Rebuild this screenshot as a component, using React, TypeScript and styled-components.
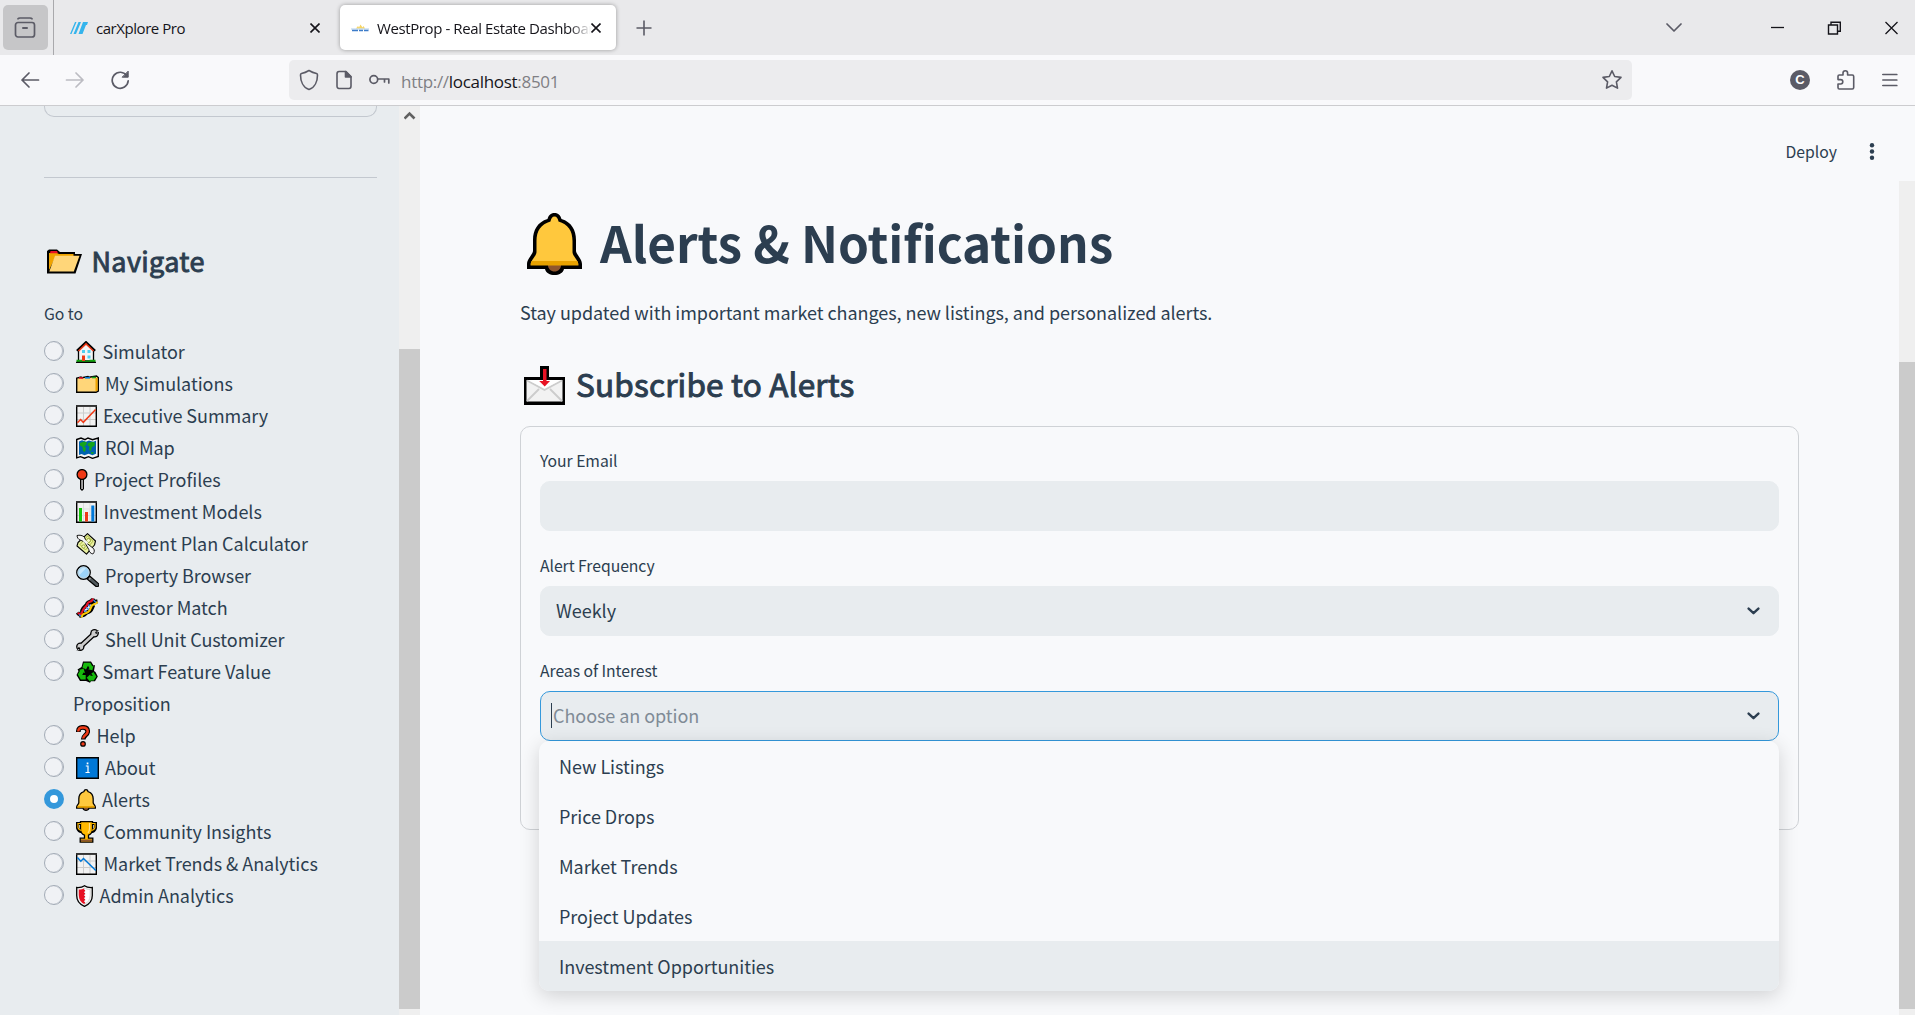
import React from "react";
import styled, { createGlobalStyle } from "styled-components";

const TEXT = "#2c3e50";
const APP_FONT = `"Noto Sans CJK SC", "Noto Sans", sans-serif`;
const UI_FONT = `"Open Sans", "Noto Sans", sans-serif`;

const GlobalStyle = createGlobalStyle`
  *, *::before, *::after { box-sizing: border-box; }
  body { margin: 0; background: #f8f9fb; overflow: hidden; }
  h1, h2, h3, p, ul { margin: 0; padding: 0; font-weight: inherit; }
`;

const Window = styled.div`
  display: flex;
  flex-direction: column;
  width: 1915px;
  height: 1015px;
  overflow: hidden;
  background: #f8f9fb;
  color: ${TEXT};
  font-family: ${APP_FONT};
`;

/* ---------- browser chrome ---------- */

const TabStrip = styled.div`
  display: flex;
  align-items: center;
  height: 55px;
  flex: none;
  background: #e9e9eb;
  font-family: ${UI_FONT};
  color: #15141a;
`;

const ViewButton = styled.div`
  display: flex;
  align-items: center;
  justify-content: center;
  width: 45px;
  height: 45px;
  margin-left: 3px;
  padding-right: 1px;
  border-radius: 5px;
  background: #c6c6c8;
`;

const StripDivider = styled.div`
  width: 1px;
  height: 55px;
  margin: 0 5px 0 5px;
  background: #a9a9ac;
`;

const Tab = styled.div<{ $active?: boolean }>`
  display: flex;
  align-items: center;
  width: 276px;
  height: 45px;
  margin-right: ${(p) => (p.$active ? 0 : 5)}px;
  padding: 0 15px 0 11px;
  border-radius: 5px;
  background: ${(p) => (p.$active ? "#fff" : "transparent")};
  box-shadow: ${(p) => (p.$active ? "0 0 4px rgba(0,0,0,.35)" : "none")};
`;

const TabTitle = styled.span<{ $spacing: number; $fade?: boolean }>`
  flex: 1;
  margin-left: 8px;
  overflow: hidden;
  white-space: nowrap;
  font-size: 15px;
  line-height: 24px;
  letter-spacing: ${(p) => p.$spacing}px;
  mask-image: ${(p) => (p.$fade ? "linear-gradient(to left, transparent 0, #000 22px)" : "none")};
`;

const Spacer = styled.div`
  flex: 1;
`;

const WindowControls = styled.div`
  display: flex;
  align-items: center;
  padding-right: 17px;
`;

const ControlSlot = styled.div<{ $gap: number }>`
  display: flex;
  margin-left: ${(p) => p.$gap}px;
`;

const Toolbar = styled.div`
  display: flex;
  align-items: center;
  height: 51px;
  flex: none;
  background: #f9f9fb;
  border-bottom: 1px solid #cccccf;
  font-family: ${UI_FONT};
`;

const NavButtons = styled.div`
  display: flex;
  gap: 25px;
  width: 289px;
  padding-left: 20px;
`;

const AddressBar = styled.div`
  display: flex;
  align-items: center;
  width: 1343px;
  height: 40px;
  padding: 0 9px 0 10px;
  border-radius: 5px;
  background: #ececee;
`;

const Url = styled.span`
  flex: 1;
  margin-left: 10px;
  padding-top: 3px;
  color: #7f7f84;
  font-size: 17px;
  line-height: 24px;
  letter-spacing: -0.3px;

  b {
    color: #15141a;
    font-weight: 400;
  }
`;

const ToolbarActions = styled.div`
  display: flex;
  align-items: center;
  gap: 26px;
  margin-left: 158px;
`;

const Avatar = styled.div`
  display: flex;
  align-items: center;
  justify-content: center;
  width: 20px;
  height: 20px;
  border-radius: 50%;
  background: #5b5b66;
  color: #fff;
  font: 700 13px/20px "Liberation Sans", sans-serif;
`;

/* ---------- page ---------- */

const Page = styled.div`
  display: flex;
  flex: 1;
  min-height: 0;
`;

const Sidebar = styled.aside`
  width: 399px;
  padding: 0 22px 0 44px;
  background: #e8ecef;
`;

const PanelBottom = styled.div`
  height: 11px;
  border: 1px solid #c3c8cf;
  border-top: 0;
  border-radius: 0 0 10px 10px;
`;

const Rule = styled.div`
  height: 1px;
  margin-top: 60px;
  background: #c3c8cf;
`;

const NavTitle = styled.h2`
  display: flex;
  align-items: center;
  height: 36px;
  margin-top: 65px;
  padding-left: 3px;
  font-size: 27px;
  line-height: 36px;
  letter-spacing: 0.35px;
  -webkit-text-stroke: 0.9px ${TEXT};
`;

const GroupLabel = styled.div`
  height: 24px;
  margin: 23px 0 9px;
  font-size: 15.75px;
  line-height: 24px;
  letter-spacing: -0.05px;
`;

const NavList = styled.ul`
  list-style: none;
`;

const NavItem = styled.li`
  display: flex;
  align-items: flex-start;
  font-size: 18px;
  line-height: 32px;
  letter-spacing: -0.04px;
`;

const Radio = styled.span<{ $checked: boolean }>`
  flex: none;
  width: 20px;
  height: 20px;
  margin: 6px 9px 0 0;
  border-radius: 50%;
  border: ${(p) => (p.$checked ? "6.5px solid #3498db" : "1px solid #a3abb6")};
  background: ${(p) => (p.$checked ? "#fff" : "#f0f2f5")};
  box-shadow: ${(p) => (p.$checked ? "none" : "inset -1px 0 0 #b9c0c9")};
`;

const NavText = styled.span`
  white-space: pre-line;
`;

const EmojiSlot = styled.span<{ $advance: number }>`
  display: inline-flex;
  width: ${(p) => p.$advance}px;
  height: 22px;
  padding-left: 3px;
  vertical-align: -4px;
  line-height: 0;
`;

const TitleIcon = styled.span<{ $width: number; $drop?: number }>`
  display: inline-flex;
  flex: none;
  width: ${(p) => p.$width}px;
  padding-top: ${(p) => p.$drop ?? 0}px;
`;

const Track = styled.div<{ $width: number }>`
  display: flex;
  flex-direction: column;
  flex: none;
  width: ${(p) => p.$width}px;
  padding-bottom: 6px;
  background: #efefef;
`;

const ArrowCap = styled.div<{ $height: number }>`
  display: flex;
  justify-content: center;
  flex: none;
  height: ${(p) => p.$height}px;
  padding-top: 4px;
`;

const Thumb = styled.div`
  flex: 1;
  background: #cbcbcb;
`;

const Main = styled.main`
  display: flex;
  flex-direction: column;
  flex: 1;
  min-width: 0;
`;

const AppHeader = styled.header`
  display: flex;
  align-items: center;
  justify-content: flex-end;
  gap: 31px;
  height: 75px;
  flex: none;
  padding: 16px 39px 0 0;
  font-size: 15.75px;
  line-height: 24px;
`;

const ScrollArea = styled.div`
  display: flex;
  flex: 1;
  min-height: 0;
`;

const Content = styled.div`
  flex: 1;
  padding: 31px 100px 0 100px;
`;

const PageTitle = styled.h1`
  display: flex;
  align-items: center;
  height: 60px;
  padding-left: 7px;
  font-size: 49.5px;
  line-height: 60px;
  font-weight: 700;
  letter-spacing: -0.06px;
`;

const Intro = styled.p`
  height: 30px;
  margin-top: 25px;
  font-size: 18px;
  line-height: 30px;
  letter-spacing: -0.045px;
`;

const SectionTitle = styled.h3`
  display: flex;
  align-items: center;
  height: 42px;
  margin-top: 35px;
  padding-left: 4px;
  font-size: 31.5px;
  line-height: 42px;
  letter-spacing: 0.2px;
  -webkit-text-stroke: 1px ${TEXT};
`;

const FormCard = styled.form`
  display: flex;
  flex-direction: column;
  gap: 23px;
  height: 404px;
  margin-top: 22px;
  padding: 23px 19px 0;
  border: 1px solid #cfd2d6;
  border-radius: 10px;
`;

const Field = styled.div`
  position: relative;
`;

const FieldLabel = styled.div`
  height: 22px;
  margin-bottom: 9px;
  font-size: 15.75px;
  line-height: 22px;
  letter-spacing: -0.05px;
`;

const Control = styled.div<{ $focused?: boolean }>`
  display: flex;
  align-items: center;
  justify-content: space-between;
  height: 50px;
  margin-bottom: 1px;
  padding: 0 18.5px 0 ${(p) => (p.$focused ? 10 : 15)}px;
  border: 1px solid ${(p) => (p.$focused ? "#3498db" : "#e8ecef")};
  border-radius: 10px;
  background: #e8ecef;
  font-size: 18px;
  line-height: 30px;
  letter-spacing: -0.03px;
`;

const Value = styled.span`
  padding-bottom: 2px;
`;

const Placeholder = styled(Value)`
  display: flex;
  align-items: center;
  color: #808b96;
  letter-spacing: -0.06px;
`;

const Caret = styled.i`
  width: 1px;
  height: 25px;
  margin-right: 1px;
  background: ${TEXT};
`;

const Menu = styled.ul`
  position: absolute;
  top: 81px;
  left: -1px;
  right: 0;
  overflow: hidden;
  list-style: none;
  border-radius: 10px;
  background: #f8f9fb;
  box-shadow: 0 5px 20px rgba(0, 0, 0, 0.16);
`;

const Option = styled.li<{ $active: boolean }>`
  height: 50px;
  padding: 0 20px;
  background: ${(p) => (p.$active ? "#e8ecef" : "transparent")};
  font-size: 18px;
  line-height: 50px;
  letter-spacing: -0.04px;
`;

/* ---------- icons ---------- */

const CloseIcon = () => (
  <svg width="10" height="10" viewBox="0 0 10 10" stroke="#15141a" strokeWidth="1.6">
    <path d="M.5.5l9 9M9.5.5l-9 9" />
  </svg>
);

const line = { fill: "none", stroke: "#5b5b66", strokeWidth: 1.7, strokeLinecap: "round", strokeLinejoin: "round" } as const;

const Chevron = () => (
  <svg width="13" height="9" viewBox="0 0 13 9" fill="none" stroke="#2c3e50" strokeWidth="2.4" strokeLinecap="round" strokeLinejoin="round">
    <path d="M1.6 1.6l4.9 4.6 4.9-4.6" />
  </svg>
);

const Bell = ({ width, height }: { width: number; height: number }) => (
  <svg width={width} height={height} viewBox="0 0 55 62" preserveAspectRatio="none">
    <path d="M27.500 0c-4 0-6 2.500-7 6C10.500 9 6 17 6 27v11c0 3-6 8-6 13v5h18c1 4 5 6 9.500 6s8.500-2 9.500-6h18v-5c0-5-6-10-6-13V27c0-10-4.500-18-14.500-21-1-3.500-3-6-7-6z" fill="#000" />
    <path d="M21 52h13c0 4-3 6.500-6.500 6.500S21 56 21 52z" fill="#8e562e" />
    <path d="M27.500 3.500c-2.300 0-3.500 2-4 5C14 11 9.500 18 9.500 28v11c0 4-5 7-6 12.500h48C50.500 46 45.500 43 45.500 39V28c0-10-4.500-17-14-19.500-.5-3-1.700-5-4-5z" fill="#ffc83d" />
    <path d="M4.500 48h46l1 4.500h-48z" fill="#e8a200" />
  </svg>
);

const glyphs: Record<string, [number, React.ReactNode]> = {
  house: [20, <>
    <path d="M2.500 9.500V20h15V9.500L10 2z" fill="#f5f5f5" stroke="#000" strokeWidth="1.300" />
    <path d="M.8 9.800L10 1l9.200 8.800" fill="none" stroke="#000" strokeWidth="2" />
    <path d="M2.500 10L10 2.900l7.500 7.100" fill="none" stroke="#f03a17" strokeWidth="1.500" />
    <path d="M6 9h3v3H6zM11.500 9h3v3h-3zM11.500 14.500h3v3h-3z" fill="#50d0f0" />
    <path d="M6 14.500h3V20H6z" fill="#f03a17" />
    <path d="M.5 18.800h5.500V20h3.500v-.5h4v-.7h6v2.700H.5z" fill="#13a10e" />
    <path d="M0 21.400h20" stroke="#000" strokeWidth="1.200" />
  </>],
  folders: [23, <>
    <path d="M.7 5.200L5 4l1 .8L12 3.500l1 .7L20.500 3l1.800 1.500v13.500L20 19.300H.7z" fill="#ffd679" stroke="#000" strokeWidth="1.400" />
    <path d="M3 5h4" stroke="#e81224" strokeWidth="1.600" />
    <path d="M9 4.800h5" stroke="#0078d7" strokeWidth="1.600" />
    <path d="M16 4.500h4" stroke="#16a51a" strokeWidth="1.600" />
    <path d="M19.500 5h2v12.500l-2 1z" fill="#f0a400" />
  </>],
  chartUp: [21, <>
    <path d="M.7.700h19.600v20.600H.7z" fill="#f2f2f2" />
    <path d="M7.500 2v19M14 2v19M1 8h19M1 14.500h19" stroke="#ccc" />
    <path d="M.7.700h19.600v20.600H.7z" fill="none" stroke="#000" strokeWidth="1.400" />
    <path d="M0 .9h21" stroke="#333" strokeWidth="1.800" />
    <path d="M1.400 17.800l3.200-3.300 2.700 2.800L19.600 4.500" fill="none" stroke="#f03a17" strokeWidth="1.500" />
  </>],
  map: [23, <>
    <path d="M.7 2.500L5 1l4 1.700L12 1l4.500 1.700L22.300 1v18.500l-5.800 1.800-4-1.600-4 1.500-4-1.500-3.800 1.200z" fill="#f5f5f5" stroke="#000" strokeWidth="1.400" />
    <path d="M3 4.500l3-1.200 4 1.400 3-1.200 4 1.300 3-1v13l-3.500 1.500-4-1.500-4 1.500-3-1.300L3 18z" fill="#0063b1" />
    <path d="M4 6l4-1.500 3 1-1 3-2 .5 2 2-1 4-2-1-.5-4L4 8.500zM12 6l4-1.200 3 .8-.5 3.500-2.500 1-1 4-2-1 .5-3.500-2-1zM15 15l3 .5-1 1.500-2-.5z" fill="#16a51a" />
  </>],
  pin: [12, <>
    <path d="M4 9h4v11l-2 2-2-2z" fill="#000" />
    <path d="M5.400 9h1.300v11H5.400z" fill="#eee" />
    <circle cx="6" cy="5.500" r="4.900" fill="#f03a17" stroke="#000" strokeWidth="1.300" />
  </>],
  bars: [21, <>
    <path d="M.7.700h19.600v20.600H.7z" fill="#f2f2f2" />
    <path d="M7.500 2v19M14 2v19M1 8h19M1 14.500h19" stroke="#ddd" />
    <path d="M.7.700h19.600v20.600H.7z" fill="none" stroke="#000" strokeWidth="1.400" />
    <path d="M0 .9h21" stroke="#333" strokeWidth="1.800" />
    <path d="M3 7h3v13.500H3z" fill="#16c60c" />
    <path d="M9 11h3v9.500H9z" fill="#f03a17" />
    <path d="M15.300 4.500h3v16h-3z" fill="#0078d7" />
  </>],
  money: [20, <>
    <path d="M11.500 .7l8 7.300-1 4-8 9.200L1 13l1-3.500z" fill="#e9f0a0" stroke="#000" strokeWidth="1.100" strokeLinejoin="round" />
    <path d="M11.500 3l5.500 5.200-7.500 8.800L4 11.500z" fill="none" stroke="#a5b43a" strokeWidth=".9" />
    <circle cx="12.500" cy="7.500" r="2" fill="#f4f8c8" stroke="#8a9a20" strokeWidth=".9" />
    <circle cx="7.500" cy="13.500" r="1.600" fill="#f4f8c8" stroke="#8a9a20" strokeWidth=".8" />
    <path d="M1 2.500c2.500-.6 5.500-.3 7.500 1.700l2 5.600L4.500 7.200C2.500 6.600 1 4.500 1 2.500z" fill="#f5f5f5" stroke="#000" strokeWidth=".9" />
    <path d="M8 8l9.500 7.500c1.300 1.800 1 4-.7 5.500-2.300-.6-3.800-2.300-4-4.500z" fill="#f5f5f5" stroke="#000" strokeWidth=".9" />
    <path d="M7.500 7l4 3.500" stroke="#f5f5f5" strokeWidth="2.500" />
  </>],
  lens: [23, <>
    <path d="M13 13l8 6.800" stroke="#000" strokeWidth="5" strokeLinecap="round" />
    <path d="M13 13l2 1.800" stroke="#999" strokeWidth="2.400" />
    <path d="M15.500 15l5.500 4.700" stroke="#4f585c" strokeWidth="2.800" strokeLinecap="round" />
    <circle cx="7.500" cy="7.500" r="6.700" fill="#9cd4fa" stroke="#000" strokeWidth="1.400" />
    <circle cx="7.500" cy="7.500" r="5.600" fill="none" stroke="#c8d4da" strokeWidth="1" />
    <path d="M3.500 10L10 3.200a5 5 0 0 0-6.500 6.800z" fill="#c6e7fc" />
  </>],
  dna: [23, <>
    <path d="M1.500 15.500C4 19 8 19.500 10.500 15.500M5.500 20.500C5 19 5.500 18 6.500 17" fill="none" stroke="#000" strokeWidth="3.800" />
    <path d="M10.500 15.500C17 14.500 15.500 9 18 7.500M6.500 17C4.500 11 9.500 10 11 7.500S15 5 21.500 4.500M11 7.500C11.500 4 16.500 6 17 1.500" fill="none" stroke="#000" strokeWidth="4" />
    <path d="M7.500 12.500l4 3.500M9.800 10l4 3.600M12 7.500l3.500 3" stroke="#3a86e8" strokeWidth="1.400" />
    <path d="M1.800 15.800C5 19 6 16 6.500 14C7.500 10 11 10 11.500 6.500C12.500 4 16.500 5.500 17 1.500" fill="none" stroke="#e81224" strokeWidth="2.100" />
    <path d="M5.500 20.500C6 15.500 9 17.500 12 15C16 12.500 14 8.500 17.500 7.500C19.500 7 20.500 6 21.500 4.800" fill="none" stroke="#fcc800" strokeWidth="2.100" />
    <path d="M17.500 3l2.500 2.500M3 17.500l2 1.800" stroke="#3a86e8" strokeWidth="1.300" />
  </>],
  wrench: [23, <>
    <path d="M4.500 17.500L18.500 4.500" stroke="#000" strokeWidth="5.200" />
    <circle cx="4.300" cy="17.700" r="4.200" fill="#000" />
    <circle cx="18.500" cy="4.300" r="4.300" fill="#000" />
    <circle cx="4.300" cy="17.700" r="2.900" fill="#ccc" />
    <circle cx="18.500" cy="4.300" r="3" fill="#ccc" />
    <path d="M4.500 17.500L18.500 4.500" stroke="#ccc" strokeWidth="2.800" />
    <path d="M19.500 4l3.500-1.500M3.500 18.500L1.500 22" stroke="#000" strokeWidth="2" />
    <path d="M20.800 3.300L23 2.300M2.600 20L1.500 22" stroke="#e8ecef" strokeWidth=".9" />
  </>],
  recycle: [22, <>
    <path d="M7 .5h8l2.500 4 1.500-.5-1 6 1.500 1L21.800 15.500l-2.800 4.700h-4l-1 1.600-4-1.800H4L.5 14l2-4L1.500 8.500l4-2.500z" fill="#000" />
    <path d="M7.800 1.800h6.500l2 3.500 1.200-.2-1.100 4.100-4.200-1 1.300-1-1.500-2.400-2 3.800-3.600-2zM2.900 8.900l4.600-1.300 1.500 4.500-1.500-.6-1.300 2.600h3.500v4.500H4.800L1.800 13.600l2.300-4zM17.400 10.900l3 4.600-2.700 4.100h-3.300v1.400l-3.700-4.200 3.700-3.600v1.500h2.600l-1.800-2z" fill="#16b90c" />
  </>],
  question: [14, <>
    <path d="M2.300 7C2.300 3.500 4 2.300 7 2.300s4.700 1.500 4.700 4.200c0 3.500-4.500 3.500-4.500 8" fill="none" stroke="#000" strokeWidth="4.700" />
    <circle cx="7" cy="18.900" r="2.900" fill="#000" />
    <path d="M2.300 6.500C2.300 3.700 4 2.600 7 2.600s4.700 1.200 4.700 3.900c0 3.500-4.500 3.500-4.500 7" fill="none" stroke="#f03a17" strokeWidth="2.500" />
    <circle cx="7" cy="18.900" r="1.700" fill="#f03a17" />
  </>],
  info: [23, <>
    <path d="M.7.700h21.600v20.600H.7z" fill="#0078d7" stroke="#000" strokeWidth="1.400" />
    <path d="M10.700 5.500h1.700v1.800h-1.700z" fill="#fff" />
    <path d="M9.800 9h2.200v6.300M9.500 15.500h4.200" fill="none" stroke="#fff" strokeWidth="1.200" />
  </>],
  trophy: [21, <>
    <path d="M5 2.500H1.500v4C2 9 4 10.500 6.500 10.500M16 2.500h3.500v4c-.5 2.500-2.500 4-5 4" fill="none" stroke="#000" strokeWidth="3.200" />
    <path d="M4.500.7h12v7c0 4-2 5.800-4 6.500v3h4.300v4H4.200v-4h4.300v-3c-2-.7-4-2.500-4-6.500z" fill="#ffb900" stroke="#000" strokeWidth="1.300" />
    <path d="M5 2.500H2v4C2.300 8 3.500 9 5.500 9.500M16 2.500h3v4c-.3 1.500-1.500 2.500-3.500 3" fill="none" stroke="#ffb900" strokeWidth="1.200" />
    <path d="M13.500 2v5.500c0 2-.7 3.500-1.500 4.500" fill="none" stroke="#ffe08a" strokeWidth="1.200" />
    <path d="M5 18.500h11v2H5z" fill="#8e562e" />
  </>],
  chartDown: [21, <>
    <path d="M.7.700h19.600v20.600H.7z" fill="#f2f2f2" />
    <path d="M7.500 2v19M14 2v19M1 8h19M1 14.500h19" stroke="#ccc" />
    <path d="M.7.700h19.600v20.600H.7z" fill="none" stroke="#000" strokeWidth="1.400" />
    <path d="M0 .9h21" stroke="#333" strokeWidth="1.800" />
    <path d="M1.400 4.500l3.400 3.700 2.700-2.700 12.300 12" fill="none" stroke="#0078d7" strokeWidth="1.500" />
  </>],
  shield: [17, <>
    <path d="M8.500.7c2 1.500 4.500 2 7.800 1.800v8c0 5-3.500 9-7.800 10.800C4 19.500.7 15.500.7 10.500v-8C4 2.700 6.500 2.200 8.500.7z" fill="#f2f2f2" stroke="#000" strokeWidth="1.300" />
    <path d="M8.500 3v16.300C5 17.500 2.800 14.500 2.800 10.300V4.500C5 4.500 7 4 8.500 3z" fill="#e81224" />
    <path d="M8.500 3v16.300c3.500-1.800 5.700-4.800 5.700-9V4.500C12 4.500 10 4 8.500 3z" fill="#fff" stroke="#ccc" strokeWidth=".8" />
    <path d="M8.500 5v14" stroke="#e81224" strokeWidth="1.200" strokeDasharray="1.500 1.500" />
  </>],
};

const Emoji = ({ name }: { name: string }) => {
  if (name === "bell") return <Bell width={20} height={22} />;
  const [width, art] = glyphs[name];
  return (
    <svg width={width} height="22" viewBox={`0 0 ${width} 22`}>
      {art}
    </svg>
  );
};

const navItems: { icon: string; advance: number; label: string }[] = [
  { icon: "house", advance: 29.5, label: "Simulator" },
  { icon: "folders", advance: 32, label: "My Simulations" },
  { icon: "chartUp", advance: 30, label: "Executive Summary" },
  { icon: "map", advance: 32, label: "ROI Map" },
  { icon: "pin", advance: 21, label: "Project Profiles" },
  { icon: "bars", advance: 30.5, label: "Investment Models" },
  { icon: "money", advance: 29.5, label: "Payment Plan Calculator" },
  { icon: "lens", advance: 32, label: "Property Browser" },
  { icon: "dna", advance: 32, label: "Investor Match" },
  { icon: "wrench", advance: 32, label: "Shell Unit Customizer" },
  { icon: "recycle", advance: 29.5, label: "Smart Feature Value\nProposition" },
  { icon: "question", advance: 23.5, label: "Help" },
  { icon: "info", advance: 32, label: "About" },
  { icon: "bell", advance: 29, label: "Alerts" },
  { icon: "trophy", advance: 30.5, label: "Community Insights" },
  { icon: "chartDown", advance: 30.5, label: "Market Trends & Analytics" },
  { icon: "shield", advance: 26.5, label: "Admin Analytics" },
];

const options = ["New Listings", "Price Drops", "Market Trends", "Project Updates", "Investment Opportunities"];

const BrowserTabs = () => (
  <TabStrip>
    <ViewButton>
      <svg width="22" height="22" viewBox="0 0 22 22" {...line}>
        <path d="M4 1.800C4.500 1 5 1 6 1h10c1 0 1.500 0 2 .8" />
        <rect x="1.500" y="5.500" width="19" height="14.500" rx="2.500" />
        <path d="M9 11h4" strokeWidth="2" />
      </svg>
    </ViewButton>
    <StripDivider />
    <Tab>
      <svg width="18" height="12" viewBox="0 0 18 12">
        <path d="M0 12L5 0h1.500l-5 12zM3.500 12l5-12H11L6 12zM8.500 12L13 0h5l-1 3h-1l-3.500 9z" fill="#35b4ec" />
      </svg>
      <TabTitle $spacing={-0.45}>carXplore Pro</TabTitle>
      <CloseIcon />
    </Tab>
    <Tab $active>
      <svg width="18" height="8" viewBox="0 0 18 8">
        <path d="M5 4.500L7 2l1 1.500L9.500 .500l2 3 1-1.500L14 4.500z" fill="#f6d566" />
        <path d="M0 5h18" stroke="#9cc3e8" strokeWidth=".8" />
        <path d="M1 6.500h6M8 6.500h4M13 6.500h4.500" stroke="#3d7cc9" strokeWidth="1.500" />
      </svg>
      <TabTitle $spacing={-0.4} $fade>WestProp - Real Estate Dashboard</TabTitle>
      <CloseIcon />
    </Tab>
    <ControlSlot $gap={20}>
      <svg width="16" height="16" viewBox="0 0 16 16" stroke="#5b5b66" strokeWidth="1.600">
        <path d="M8 .5v15M.5 8h15" />
      </svg>
    </ControlSlot>
    <Spacer />
    <WindowControls>
      <svg width="16" height="10" viewBox="0 0 16 10" {...line}>
        <path d="M1 1l7 7 7-7" />
      </svg>
      <ControlSlot $gap={88}>
        <svg width="14" height="14" viewBox="0 0 14 14" stroke="#15141a" strokeWidth="1.300">
          <path d="M1 6.500h13" />
        </svg>
      </ControlSlot>
      <ControlSlot $gap={43}>
        <svg width="14" height="14" viewBox="0 0 14 14" fill="none" stroke="#15141a" strokeWidth="1.400">
          <path d="M1.500 4h9v9h-9zM4 4V1.200h9.300v9h-2.800" />
        </svg>
      </ControlSlot>
      <ControlSlot $gap={43}>
        <svg width="14" height="14" viewBox="0 0 14 14" stroke="#15141a" strokeWidth="1.300">
          <path d="M1.500 1l12 12M13.500 1l-12 12" />
        </svg>
      </ControlSlot>
    </WindowControls>
  </TabStrip>
);

const UrlIcon = styled.svg`
  flex: none;
  margin-right: 16px;
`;

const KeyIcon = styled.svg`
  flex: none;
  margin-left: 1px;
`;

const BrowserToolbar = () => (
  <Toolbar>
    <NavButtons>
      <svg width="20" height="20" viewBox="0 0 20 20" {...line}>
        <path d="M18.500 10H2M9 3l-7 7 7 7" />
      </svg>
      <svg width="20" height="20" viewBox="0 0 20 20" {...line} stroke="#bcbcc2">
        <path d="M1.500 10H18M11 3l7 7-7 7" />
      </svg>
      <svg width="20" height="20" viewBox="0 0 20 20" {...line}>
        <path d="M17 6a8 8 0 1 0 1.200 4.800" />
        <path d="M18.200 1.500v5.700h-5.700z" fill="#5b5b66" strokeWidth="1" />
      </svg>
    </NavButtons>
    <AddressBar>
      <UrlIcon width="20" height="22" viewBox="0 0 20 22" {...line} strokeWidth="1.600">
        <path d="M10 1.500c2.500 1.500 5 2.500 7.500 3 .8.200 1 .6 1 1.400 0 6-2.500 12.600-8.500 14.600-6-2-8.500-8.600-8.500-14.600 0-.8.200-1.200 1-1.400C5 4 7.500 3 10 1.500z" />
      </UrlIcon>
      <UrlIcon width="17" height="20" viewBox="0 0 17 20" {...line} strokeWidth="1.600">
        <path d="M4 1.500h7l5 5V16c0 1.500-.7 2.500-2 2.500H4c-1.300 0-2-1-2-2.500V4c0-1.500.7-2.500 2-2.500z" />
        <path d="M10.500 1.500v5.500H16z" fill="#5b5b66" />
      </UrlIcon>
      <KeyIcon width="22" height="12" viewBox="0 0 22 12" {...line} strokeWidth="1.700">
        <circle cx="4.800" cy="5.500" r="3.900" />
        <path d="M8.700 5H19.800v4M15.500 5v3" />
      </KeyIcon>
      <Url>
        http://<b>localhost</b>:8501
      </Url>
      <svg width="22" height="22" viewBox="0 0 22 22" {...line} strokeWidth="1.600">
        <path d="M11 1.800l2.700 5.700 6.300.9-4.600 4.400 1.100 6.300L11 16.200l-5.500 2.900 1.100-6.300L2 8.400l6.300-.9z" />
      </svg>
    </AddressBar>
    <ToolbarActions>
      <Avatar>C</Avatar>
      <svg width="20" height="22" viewBox="0 0 20 22" {...line} strokeWidth="1.600">
        <path d="M2 8.500V7.300c0-.9.500-1.300 1.300-1.300H7V4a2.300 2.300 0 0 1 4.600 0v2h4.700c.9 0 1.400.5 1.400 1.400v11.200c0 .9-.5 1.400-1.400 1.400H3.300c-.8 0-1.300-.5-1.300-1.400V15h2.600a2.200 2.200 0 0 0 0-4.400H2z" />
      </svg>
      <svg width="17" height="14" viewBox="0 0 17 14" {...line}>
        <path d="M.8 1.500h14M.8 7h14M.8 12.500h14" />
      </svg>
    </ToolbarActions>
  </Toolbar>
);

export default function App() {
  return (
    <Window>
      <GlobalStyle />
      <BrowserTabs />
      <BrowserToolbar />
      <Page>
        <Sidebar>
          <PanelBottom />
          <Rule />
          <NavTitle>
            <TitleIcon $width={44.5} $drop={1}>
              <svg width="35" height="25" viewBox="0 0 35 25">
                <path d="M0 2l2-1.500h8L13 3h15v2h7L28.500 24.500H0z" fill="#000" />
                <path d="M2 4h8l2 1h14.500v2H9L2 21z" fill="#f0a400" />
                <path d="M3.500 2h6.500l1 2.200H3z" fill="#e81224" />
                <path d="M8 6.800h24.500L26.800 22.500H2.300z" fill="#ffd679" />
                <path d="M2 5h5.500L2.300 20z" fill="#f0a400" />
              </svg>
            </TitleIcon>
            Navigate
          </NavTitle>
          <GroupLabel>Go to</GroupLabel>
          <NavList>
            {navItems.map((item) => (
              <NavItem key={item.label}>
                <Radio $checked={item.label === "Alerts"} />
                <NavText>
                  <EmojiSlot $advance={item.advance}>
                    <Emoji name={item.icon} />
                  </EmojiSlot>
                  {item.label}
                </NavText>
              </NavItem>
            ))}
          </NavList>
        </Sidebar>
        <Track $width={21}>
          <ArrowCap $height={243}>
            <svg width="12" height="10" viewBox="0 0 12 10" fill="none" stroke="#606060" strokeWidth="2.600">
              <path d="M.5 8.500l5-5 5 5" />
            </svg>
          </ArrowCap>
          <Thumb />
        </Track>
        <Main>
          <AppHeader>
            <span>Deploy</span>
            <svg width="8" height="18" viewBox="0 0 8 18" fill={TEXT}>
              <circle cx="4" cy="2.200" r="2.200" />
              <circle cx="4" cy="8.500" r="2.200" />
              <circle cx="4" cy="14.800" r="2.200" />
            </svg>
          </AppHeader>
          <ScrollArea>
            <Content>
              <PageTitle>
                <TitleIcon $width={73} $drop={3}>
                  <Bell width={55} height={62} />
                </TitleIcon>
                Alerts &amp; Notifications
              </PageTitle>
              <Intro>Stay updated with important market changes, new listings, and personalized alerts.</Intro>
              <SectionTitle>
                <TitleIcon $width={52} $drop={4}>
                  <svg width="41" height="39" viewBox="0 0 41 39">
                    <path d="M0 11h16V0h9v11h16v28H0z" fill="#000" />
                    <path d="M2.500 14h36v21.500h-36z" fill="#f2f2f2" />
                    <path d="M3 35l12-12M38 35L26 23M3 14.500L20.500 24 38 14.500" fill="none" stroke="#ccc" strokeWidth="1.800" />
                    <path d="M4 14h33L20.500 22.500z" fill="#fff" />
                    <path d="M19 3h3.500v12H26l-5.300 5.500L15.200 15H19z" fill="#e81224" />
                  </svg>
                </TitleIcon>
                Subscribe to Alerts
              </SectionTitle>
              <FormCard>
                <Field>
                  <FieldLabel>Your Email</FieldLabel>
                  <Control />
                </Field>
                <Field>
                  <FieldLabel>Alert Frequency</FieldLabel>
                  <Control>
                    <Value>Weekly</Value>
                    <Chevron />
                  </Control>
                </Field>
                <Field>
                  <FieldLabel>Areas of Interest</FieldLabel>
                  <Control $focused>
                    <Placeholder>
                      <Caret />
                      Choose an option
                    </Placeholder>
                    <Chevron />
                  </Control>
                  <Menu>
                    {options.map((option, i) => (
                      <Option key={option} $active={i === options.length - 1}>
                        {option}
                      </Option>
                    ))}
                  </Menu>
                </Field>
              </FormCard>
            </Content>
            <Track $width={16}>
              <ArrowCap $height={181} />
              <Thumb />
            </Track>
          </ScrollArea>
        </Main>
      </Page>
    </Window>
  );
}
